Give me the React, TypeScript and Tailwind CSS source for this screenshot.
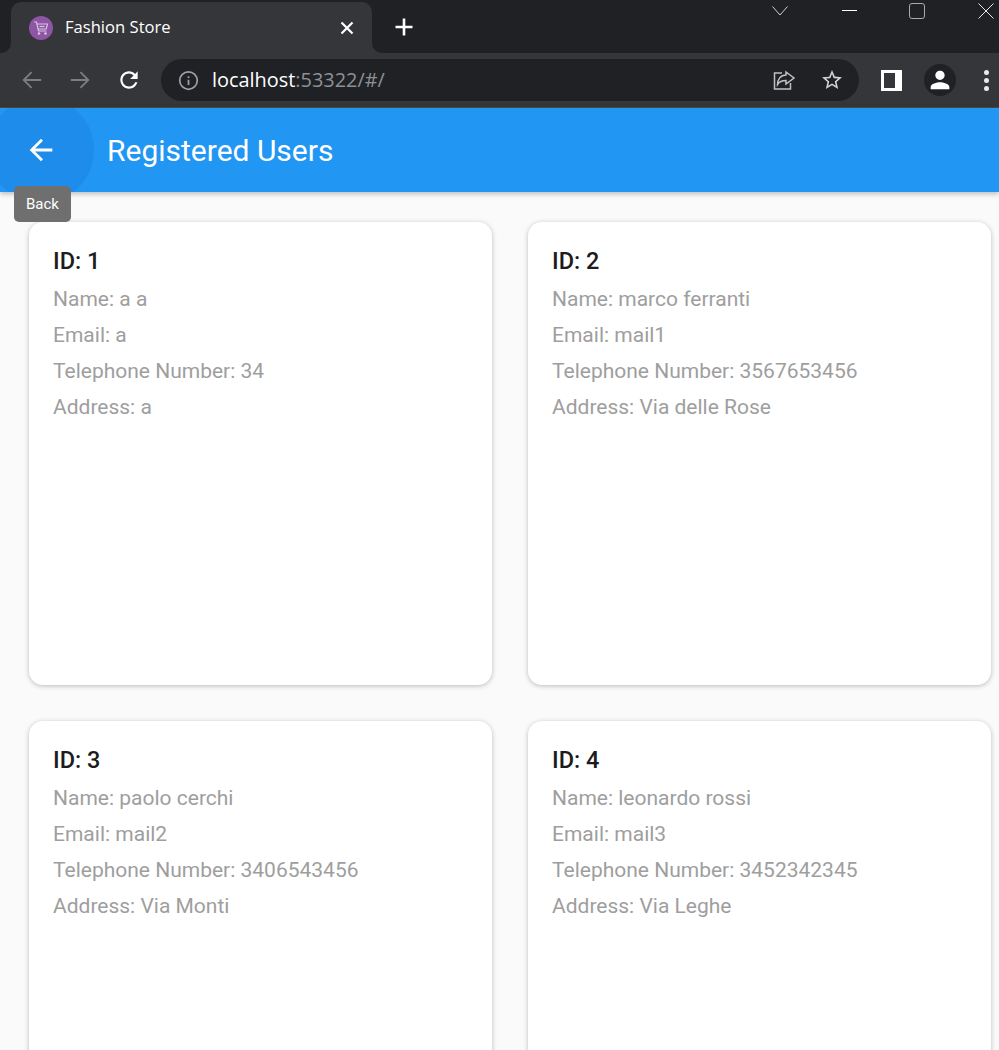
import React from 'react';

interface User {
  id: number;
  name: string;
  email: string;
  phone: string;
  address: string;
}

const users: User[] = [
  { id: 1, name: 'a a', email: 'a', phone: '34', address: 'a' },
  { id: 2, name: 'marco ferranti', email: 'mail1', phone: '3567653456', address: 'Via delle Rose' },
  { id: 3, name: 'paolo cerchi', email: 'mail2', phone: '3406543456', address: 'Via Monti' },
  { id: 4, name: 'leonardo rossi', email: 'mail3', phone: '3452342345', address: 'Via Leghe' },
];

const ArrowLeft: React.FC<{ className: string }> = ({ className }) => (
  <svg viewBox="0 0 24 24" className={className} fill="currentColor">
    <path d="M20 11H7.83l5.59-5.59L12 4l-8 8 8 8 1.41-1.41L7.83 13H20v-2z" />
  </svg>
);

// thinner arrow used by the browser toolbar
const NavArrow: React.FC<{ className: string }> = ({ className }) => (
  <svg viewBox="0 0 24 24" className={className} fill="none" stroke="currentColor" strokeWidth="2.2">
    <path d="M23 12H2M11.5 2.5L2 12l9.5 9.5" />
  </svg>
);

const TabStrip: React.FC = () => (
  <div className="relative flex h-[53px] shrink-0 bg-[#202124] pl-[11px] pt-[2px]">
    <div className="relative flex h-[51px] w-[361px] items-center rounded-t-[10px] bg-[#35363a] pl-[18px] pr-[18px]">
      <span className="absolute bottom-0 left-[-11px] h-[11px] w-[11px] bg-[#35363a]">
        <span className="block h-full w-full rounded-br-[10px] bg-[#202124]" />
      </span>
      <span className="absolute bottom-0 right-[-11px] h-[11px] w-[11px] bg-[#35363a]">
        <span className="block h-full w-full rounded-bl-[10px] bg-[#202124]" />
      </span>
      <svg viewBox="0 0 24 24" className="h-6 w-6 shrink-0">
        <circle cx="12" cy="12" r="12" fill="#8e55a5" />
        <path d="M5 6h2.5l2 9h8M8 8h10.5l-1.3 5H9.2" fill="none" stroke="#d9c4e0" strokeWidth="1.2" />
        <path d="M10.5 10.5h5" stroke="#d9c4e0" strokeWidth="1.2" />
        <circle cx="10" cy="17.5" r="1.3" fill="#d9c4e0" />
        <circle cx="16.5" cy="17.5" r="1.3" fill="#d9c4e0" />
      </svg>
      <span className="ml-3 flex-1 font-['Open_Sans',sans-serif] text-[16.6px] text-white">Fashion Store</span>
      <svg viewBox="0 0 14 14" className="h-[14px] w-[14px]" stroke="white" strokeWidth="2.2">
        <path d="M1.5 1.5l11 11M12.5 1.5l-11 11" />
      </svg>
    </div>
    <svg viewBox="0 0 20 20" className="ml-[22px] mt-[15px] h-[20px] w-[20px]" stroke="white" strokeWidth="2.6">
      <path d="M10 1.5v17M1.5 10h17" />
    </svg>
    <div className="absolute right-0 top-0 flex">
      <svg viewBox="0 0 16 10" className="absolute right-[211px] top-[6px] h-[10px] w-[16px]" fill="none" stroke="#d0d1d3">
        <path d="M.5.5L8 9l7.5-8.5" />
      </svg>
      <span className="absolute right-[142px] top-[10px] h-px w-[15px] bg-white" />
      <span className="absolute right-[74px] top-[3px] h-[16px] w-[16px] rounded-[3px] border border-[#a9aaac]" />
      <svg viewBox="0 0 16 16" className="absolute right-[5px] top-[3px] h-[16px] w-[16px]" fill="none" stroke="#e8e8e8">
        <path d="M.5.5l15 15M15.5.5l-15 15" />
      </svg>
    </div>
  </div>
);

const Toolbar: React.FC = () => (
  <div className="flex h-[55px] shrink-0 items-center border-b border-[#4a4a4a] bg-[#35363a] pl-[22px]">
    <NavArrow className="h-5 w-5 text-[#7c7d80]" />
    <NavArrow className="ml-7 h-5 w-5 rotate-180 text-[#7c7d80]" />
    <svg viewBox="0 0 24 24" className="ml-[26px] h-[26px] w-[26px] text-white" fill="currentColor">
      <path d="M17.65 6.35C16.2 4.9 14.21 4 12 4c-4.42 0-7.99 3.58-7.99 8s3.57 8 7.99 8c3.73 0 6.84-2.55 7.73-6h-2.08c-.82 2.33-3.04 4-5.65 4-3.31 0-6-2.69-6-6s2.69-6 6-6c1.66 0 3.14.69 4.22 1.78L13 11h7V4l-2.35 2.35z" />
    </svg>
    <div className="ml-[19px] flex h-[42px] w-[698px] items-center rounded-full bg-[#202124] pl-[17px]">
      <svg viewBox="0 0 24 24" className="h-[21px] w-[21px] text-[#9aa0a6]" fill="none" stroke="currentColor" strokeWidth="2">
        <circle cx="12" cy="12" r="10" />
        <path d="M12 11v6M12 7v2" />
      </svg>
      <span className="ml-[13px] flex-1 font-['Open_Sans',sans-serif] text-[19.9px] text-[#8c9196]">
        <span className="text-white">localhost</span>:53322/#/
      </span>
      <svg viewBox="0 0 24 24" className="h-6 w-6 text-[#bdc1c6]" fill="none" stroke="currentColor" strokeWidth="1.5">
        <path d="M10 5H2.5v16h16v-6" />
        <path d="M14 4l8 6-8 6v-3.5c-4 0-7 1.5-8.5 4 0-5 3-9.5 8.5-9.5z" />
      </svg>
      <svg viewBox="0 0 24 24" className="ml-6 mr-[15px] h-6 w-6 text-[#d0d2d5]" fill="currentColor">
        <path d="M22 9.24l-7.19-.62L12 2 9.19 8.63 2 9.24l5.46 4.73L5.82 21 12 17.27 18.18 21l-1.63-7.03L22 9.24zM12 15.4l-3.76 2.27 1-4.28-3.32-2.88 4.38-.38L12 6.1l1.71 4.04 4.38.38-3.32 2.88 1 4.28L12 15.4z" />
      </svg>
    </div>
    <div className="ml-[22px] flex h-[21px] w-[21px] bg-white p-[3px]">
      <span className="h-full w-[11px] bg-[#35363a]" />
    </div>
    <div className="ml-[22px] flex h-8 w-8 items-center justify-center rounded-full bg-[#202124]">
      <svg viewBox="0 0 24 24" className="h-7 w-7 text-white" fill="currentColor">
        <path d="M12 12c2.21 0 4-1.79 4-4s-1.79-4-4-4-4 1.79-4 4 1.79 4 4 4zm0 2c-2.67 0-8 1.34-8 4v2h16v-2c0-2.66-5.33-4-8-4z" />
      </svg>
    </div>
    <div className="ml-[28px] flex flex-col gap-[3px]">
      <span className="h-[5px] w-[5px] rounded-full bg-[#e8eaed]" />
      <span className="h-[5px] w-[5px] rounded-full bg-[#e8eaed]" />
      <span className="h-[5px] w-[5px] rounded-full bg-[#e8eaed]" />
    </div>
  </div>
);

const AppBar: React.FC = () => (
  <header className="relative z-10 flex h-[84px] shrink-0 items-center bg-[#2196f3] shadow-[0_2px_5px_rgba(0,0,0,0.25)]">
    <div className="absolute inset-0 overflow-hidden">
      <span className="absolute left-[-12px] top-[-11px] h-[106px] w-[106px] rounded-full bg-[#1e88e5]/70" />
    </div>
    <ArrowLeft className="relative ml-[24px] h-[34px] w-[34px] text-white" />
    <h1 className="relative ml-[49px] font-['Roboto',sans-serif] text-[30px] text-white">Registered Users</h1>
    <div className="absolute left-[14px] top-[78px] flex h-[36px] w-[57px] items-center justify-center rounded-[5px] bg-[#6f6f6f] font-['Roboto',sans-serif] text-[15px] text-white">
      Back
    </div>
  </header>
);

const UserCard: React.FC<{ user: User }> = ({ user }) => (
  <div className="h-[463px] rounded-[14px] bg-white px-6 pt-[23px] font-['Roboto',sans-serif] shadow-[0_1px_5px_rgba(0,0,0,0.25)]">
    <h2 className="mb-[4px] text-[23.5px] font-medium leading-[32px] text-[#1c1c1c]">ID: {user.id}</h2>
    <div className="text-[21px] leading-[36px] text-[#9e9e9e]">
      <p>Name: {user.name}</p>
      <p>Email: {user.email}</p>
      <p>Telephone Number: {user.phone}</p>
      <p>Address: {user.address}</p>
    </div>
  </div>
);

export default function App() {
  return (
    <div className="flex h-[1050px] w-[999px] flex-col overflow-hidden bg-[#fafafa]">
      <TabStrip />
      <Toolbar />
      <AppBar />
      <main className="grid grid-cols-2 gap-9 pb-0 pl-[29px] pr-2 pt-[30px]">
        {users.map((user) => (
          <UserCard key={user.id} user={user} />
        ))}
      </main>
    </div>
  );
}
